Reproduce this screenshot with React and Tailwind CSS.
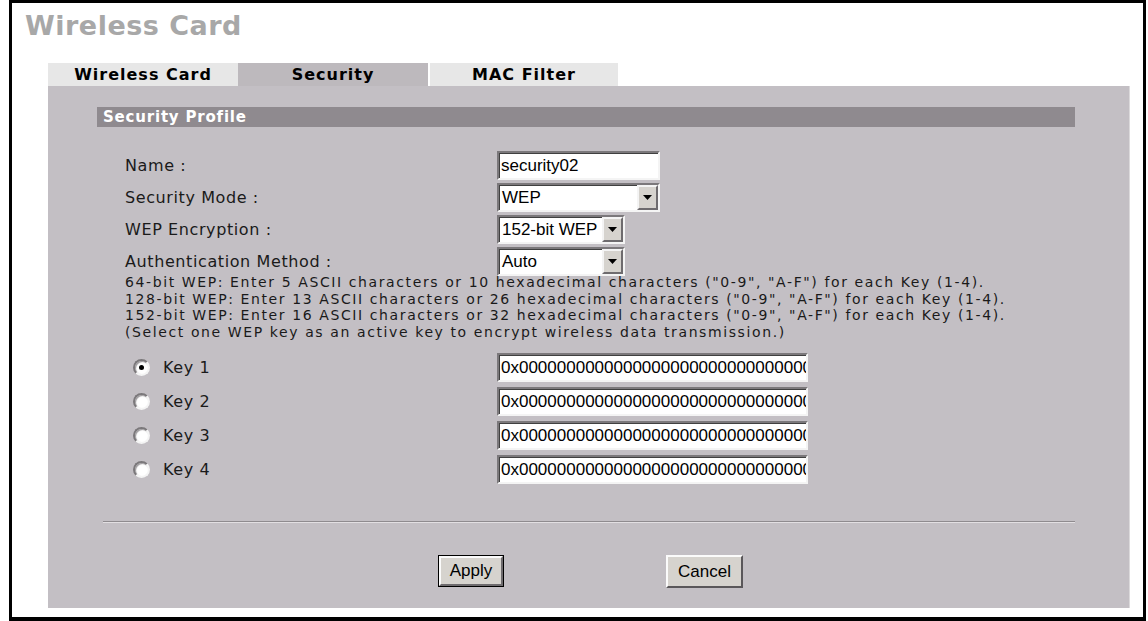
import React from 'react';

const verdana = "font-['DejaVu_Sans','Verdana',sans-serif]";
const arial = "font-['Liberation_Sans','Arial',sans-serif]";

const inset =
  'border-2 border-t-[#7b787b] border-l-[#7b787b] border-b-[#f4f4f4] border-r-[#f4f4f4] shadow-[inset_1px_1px_0_#404040]';

const TextBox = ({ value, w }) => (
  <input
    readOnly
    value={value}
    className={`${inset} ${arial} ${w} h-[29px] bg-white text-[17px] text-black pl-[2px] outline-none`}
  />
);

const Select = ({ value, w }) => (
  <div className={`${inset} ${w} h-[29px] bg-white flex items-center`}>
    <span className={`${arial} text-[17px] text-black pl-[3px] flex-1 whitespace-nowrap`}>{value}</span>
    <div className="w-[21px] h-full bg-[#d6d3ce] border-2 border-t-[#f4f4f4] border-l-[#f4f4f4] border-b-[#6e6b6e] border-r-[#6e6b6e] flex items-center justify-center">
      <svg width="9" height="5" viewBox="0 0 9 5">
        <path d="M0 0h9L4.5 5z" fill="#000" />
      </svg>
    </div>
  </div>
);

const Radio = ({ checked }) => (
  <div className="w-[17px] h-[17px] rounded-full bg-white border-2 border-t-[#7b787b] border-l-[#7b787b] border-b-[#f4f4f4] border-r-[#f4f4f4] shadow-[inset_1px_1px_1px_#9a979a] flex items-center justify-center">
    {checked && <div className="w-[5px] h-[5px] rounded-full bg-black" />}
  </div>
);

const keyValue = '0x000000000000000000000000000000000000';

const WirelessSecurity = () => {
  const rows = [
    { label: 'Name :', field: <TextBox value="security02" w="w-[163px]" /> },
    { label: 'Security Mode :', field: <Select value="WEP" w="w-[163px]" /> },
    { label: 'WEP Encryption :', field: <Select value="152-bit WEP" w="w-[128px]" /> },
    { label: 'Authentication Method :', field: <Select value="Auto" w="w-[128px]" /> },
  ];

  return (
    <div className="w-[1148px] h-[621px] bg-white overflow-hidden">
      <div className="ml-[9px] w-[1137px] h-[621px] border-[3px] border-b-[4px] border-black flex flex-col">
        <h1 className={`${verdana} font-bold text-[27px] leading-none text-[#a8a8a8] pl-[13px] pt-[9px] tracking-[0.5px]`}>
          Wireless Card
        </h1>

        {/* tab strip */}
        <div className={`${verdana} font-bold text-[16px] text-black flex ml-[36px] mt-[24px] h-[23px] tracking-[1px]`}>
          <div className="w-[190px] bg-[#e7e7e7] flex items-center justify-center">Wireless Card</div>
          <div className="w-[190px] bg-[#bdb9bd] flex items-center justify-center">Security</div>
          <div className="w-[188px] ml-[2px] bg-[#e7e7e7] flex items-center justify-center">MAC Filter</div>
        </div>

        <div className="ml-[36px] mr-[13px] h-[522px] bg-[#c3bfc4] border-r border-r-[#dcdadc] pt-[21px] pl-[49px]">
          <div className={`${verdana} font-bold text-[15px] text-white w-[978px] h-[20px] bg-[#8f8a8f] flex items-center pl-[6px] tracking-[0.8px]`}>
            Security Profile
          </div>

          <div className={`${verdana} ml-[28px] mt-[24px] text-[#1a1a1a]`}>
            <div className="flex flex-col gap-[3px]">
              {rows.map((r) => (
                <div key={r.label} className="flex items-center">
                  <div className="w-[372px] text-[16px] tracking-[0.6px]">{r.label}</div>
                  {r.field}
                </div>
              ))}
            </div>

            <div className="text-[14px] leading-[16.5px] tracking-[1.6px] mt-[-2px]">
              <p>64-bit WEP: Enter 5 ASCII characters or 10 hexadecimal characters ("0-9", "A-F") for each Key (1-4).</p>
              <p>128-bit WEP: Enter 13 ASCII characters or 26 hexadecimal characters ("0-9", "A-F") for each Key (1-4).</p>
              <p>152-bit WEP: Enter 16 ASCII characters or 32 hexadecimal characters ("0-9", "A-F") for each Key (1-4).</p>
              <p>(Select one WEP key as an active key to encrypt wireless data transmission.)</p>
            </div>

            <div className="flex flex-col gap-[5px] mt-[13px]">
              {[1, 2, 3, 4].map((n) => (
                <div key={n} className="flex items-center">
                  <div className="w-[372px] flex items-center pl-[8px] gap-[13px]">
                    <Radio checked={n === 1} />
                    <span className="text-[16px] tracking-[0.6px]">Key {n}</span>
                  </div>
                  <TextBox value={keyValue} w="w-[311px]" />
                </div>
              ))}
            </div>
          </div>

          <div className="ml-[6px] w-[972px] mt-[37px] h-[2px] border-t border-t-[#8f8b8f] border-b border-b-[#e2dfe2]" />

          <div className={`${arial} flex mt-[32px] ml-[341px] gap-[162px] text-[17px] text-black`}>
            <button className="w-[66px] h-[32px] border border-black bg-[#d6d3ce] flex">
              <span className="flex-1 flex items-center justify-center border-2 border-t-[#fbfbfb] border-l-[#fbfbfb] border-b-[#6e6b6e] border-r-[#6e6b6e]">Apply</span>
            </button>
            <button className="w-[77px] h-[33px] bg-[#d6d3ce] border-2 border-t-[#fbfbfb] border-l-[#fbfbfb] border-b-[#5a575a] border-r-[#5a575a]">
              Cancel
            </button>
          </div>
        </div>
      </div>
    </div>
  );
};

export default WirelessSecurity;
